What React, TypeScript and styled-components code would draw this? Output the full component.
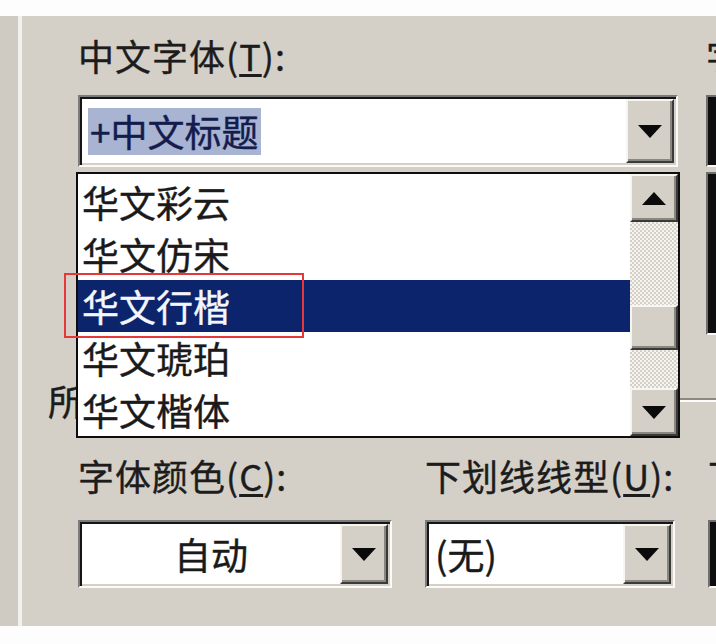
import React from 'react';
import styled, { createGlobalStyle, css } from 'styled-components';

const GlobalStyle = createGlobalStyle`
  html, body {
    margin: 0;
    padding: 0;
    background: #fdfdfd;
  }
  body {
    font-family: "Noto Sans CJK SC", "Liberation Sans", sans-serif;
    -webkit-text-stroke: 0.4px currentColor;
  }
`;

const raised = css`
  box-sizing: border-box;
  background: #d4d0c8;
  border: 2px solid;
  border-color: #f6f5f2 #3a3a3a #3a3a3a #f6f5f2;
  box-shadow: inset -2px -2px 0 #8a877f;
`;

const Page = styled.div`
  width: 716px;
  height: 644px;
  padding-top: 16px;
  box-sizing: border-box;
  overflow: hidden;
  background: #fdfdfd;
`;

const Dialog = styled.div`
  display: flex;
  height: 610px;
  background: #d4d0c8;
  overflow: hidden;
`;

const LeftEdge = styled.div`
  flex: 0 0 18px;
  background: #cfcbc3;
  border-right: 4px solid #f3f1ec;
`;

const Body = styled.div`
  flex: 1;
  min-width: 0;
  display: flex;
  flex-direction: column;
  padding: 19px 0 0 26px;
`;

const Row = styled.div<{ $gap: number; $top?: number }>`
  display: flex;
  align-items: flex-start;
  gap: ${p => p.$gap}px;
  padding-left: 30px;
  margin-top: ${p => p.$top ?? 0}px;
`;

const Field = styled.div<{ $width: number }>`
  position: relative;
  flex: 0 0 ${p => p.$width}px;
  display: flex;
  flex-direction: column;
`;

const Label = styled.div<{ $after: number }>`
  height: 40px;
  line-height: 40px;
  margin-bottom: ${p => p.$after}px;
  font-size: 36px;
  letter-spacing: 1px;
  color: #1c1c1c;
  white-space: nowrap;
`;

const Key = styled.span`
  text-decoration: underline;
  text-underline-offset: 3px;
`;

const Combo = styled.div<{ $height: number }>`
  display: flex;
  height: ${p => p.$height}px;
  box-sizing: border-box;
  padding: 2px;
  background: #fff;
  border: 2px solid;
  border-color: #7b7b7b #fbfaf7 #fbfaf7 #7b7b7b;
  box-shadow: inset 2px 2px 0 #151515, inset -2px -2px 0 #d4d0c8;
`;

const ComboText = styled.div<{ $center?: boolean }>`
  flex: 1;
  display: flex;
  align-items: center;
  justify-content: ${p => (p.$center ? 'center' : 'flex-start')};
  padding-left: ${p => (p.$center ? 0 : 6)}px;
  font-size: 37px;
  color: #1a1a1a;
  white-space: nowrap;
`;

const Highlight = styled.span`
  display: inline-block;
  height: 47px;
  line-height: 47px;
  padding: 0 2px;
  background: #a8b4d2;
  color: #141c4e;
`;

const DropButton = styled.div`
  ${raised};
  flex: 0 0 48px;
  display: flex;
  align-items: center;
  justify-content: center;
`;

const Popup = styled.div`
  position: absolute;
  top: calc(100% + 5px);
  left: -2px;
  width: 604px;
  box-sizing: border-box;
  display: flex;
  background: #fff;
  border: 2px solid #0d0d0d;
  z-index: 2;
`;

const Options = styled.div`
  flex: 1;
  display: flex;
  flex-direction: column;
  padding-top: 2px;
`;

const Option = styled.div<{ $selected?: boolean }>`
  height: 52px;
  line-height: 52px;
  padding-left: 4px;
  font-size: 37px;
  color: ${p => (p.$selected ? '#f4f6fb' : '#1a1a1a')};
  background: ${p => (p.$selected ? '#0b246c' : 'transparent')};
  white-space: nowrap;
`;

const ScrollBar = styled.div`
  flex: 0 0 48px;
  display: flex;
  flex-direction: column;
`;

const ScrollButton = styled.div`
  ${raised};
  flex: 0 0 48px;
  display: flex;
  align-items: center;
  justify-content: center;
`;

const Track = styled.div<{ $height?: number }>`
  flex: ${p => (p.$height ? `0 0 ${p.$height}px` : '1')};
  background: repeating-conic-gradient(#d4d0c8 0 25%, #f5f4f1 0 50%) 0 0 / 4px 4px;
`;

const Thumb = styled.div`
  ${raised};
  flex: 0 0 45px;
`;

const Annotation = styled.div`
  position: absolute;
  left: -14px;
  top: 99px;
  width: 240px;
  height: 65px;
  box-sizing: border-box;
  border: 2px solid #e5383b;
  pointer-events: none;
`;

const GroupHeader = styled.div`
  display: flex;
  align-items: center;
  gap: 8px;
  height: 40px;
  margin-top: 45px;
  font-size: 36px;
  color: #1c1c1c;
  white-space: nowrap;
`;

const GroupLine = styled.div`
  flex: 1;
  border-top: 2px solid #8c8981;
  border-bottom: 2px solid #fbfaf8;
`;

const StubBox = styled.div<{ $height: number; $top?: number }>`
  height: ${p => p.$height}px;
  margin-top: ${p => p.$top ?? 0}px;
  box-sizing: border-box;
  background: #fff;
  border: 2px solid;
  border-color: #6f6f6f #fbfaf7 #fbfaf7 #6f6f6f;
  box-shadow: inset 14px 4px 0 #0e0e0e;
`;

const Arrow = ({ up }: { up?: boolean }) => (
  <svg width="24" height="13" viewBox="0 0 24 13">
    <polygon points={up ? '12,0 24,13 0,13' : '0,0 24,0 12,13'} fill="#0a0a0a" />
  </svg>
);

const fonts = ['华文彩云', '华文仿宋', '华文行楷', '华文琥珀', '华文楷体'];
const selectedFont = '华文行楷';

export default function App() {
  return (
    <>
      <GlobalStyle />
      <Page>
        <Dialog>
          <LeftEdge />
          <Body>
            <Row $gap={28}>
              <Field $width={600}>
                <Label $after={20}>
                  中文字体(<Key>T</Key>):
                </Label>
                <Combo $height={72}>
                  <ComboText>
                    <Highlight>+中文标题</Highlight>
                  </ComboText>
                  <DropButton>
                    <Arrow />
                  </DropButton>
                </Combo>
                <Popup>
                  <Options>
                    {fonts.map(f => (
                      <Option key={f} $selected={f === selectedFont}>
                        {f}
                      </Option>
                    ))}
                  </Options>
                  <ScrollBar>
                    <ScrollButton>
                      <Arrow up />
                    </ScrollButton>
                    <Track $height={83} />
                    <Thumb />
                    <Track />
                    <ScrollButton>
                      <Arrow />
                    </ScrollButton>
                  </ScrollBar>
                  <Annotation />
                </Popup>
              </Field>
              <Field $width={200}>
                <Label $after={20}>
                  字形(<Key>Y</Key>):
                </Label>
                <StubBox $height={72} />
                <StubBox $height={163} $top={5} />
              </Field>
            </Row>

            <GroupHeader>
              所有文字
              <GroupLine />
            </GroupHeader>

            <Row $gap={33} $top={35}>
              <Field $width={314}>
                <Label $after={25}>
                  字体颜色(<Key>C</Key>):
                </Label>
                <Combo $height={68}>
                  <ComboText $center>自动</ComboText>
                  <DropButton>
                    <Arrow />
                  </DropButton>
                </Combo>
              </Field>
              <Field $width={250}>
                <Label $after={25}>
                  下划线线型(<Key>U</Key>):
                </Label>
                <Combo $height={68}>
                  <ComboText>(无)</ComboText>
                  <DropButton>
                    <Arrow />
                  </DropButton>
                </Combo>
              </Field>
              <Field $width={200}>
                <Label $after={25}>
                  下划线颜色(<Key>I</Key>):
                </Label>
                <StubBox $height={68} />
              </Field>
            </Row>
          </Body>
        </Dialog>
      </Page>
    </>
  );
}
